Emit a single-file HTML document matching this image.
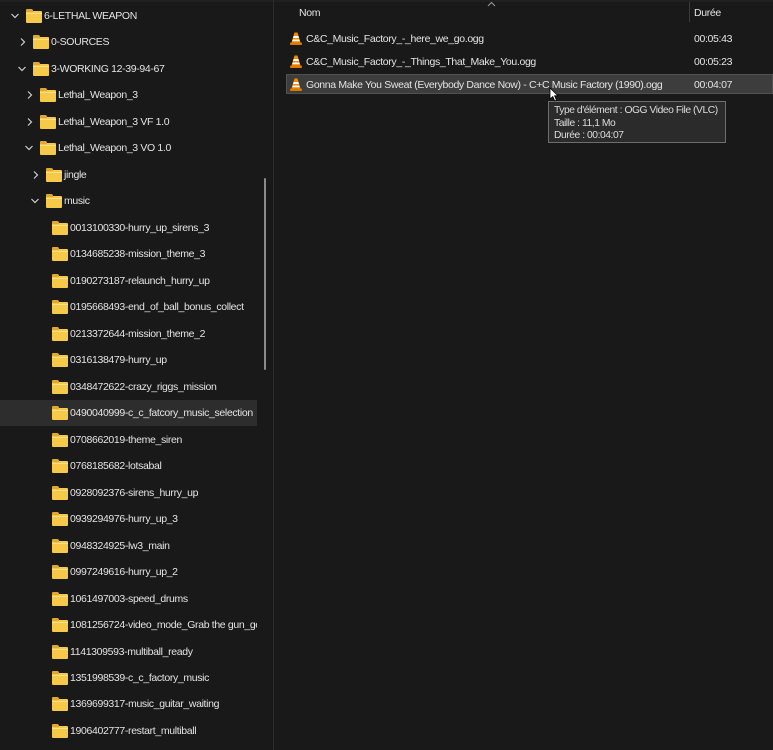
<!DOCTYPE html>
<html><head><meta charset="utf-8"><style>
body{margin:0;width:773px;height:750px;background:#191919;overflow:hidden;font-family:"Liberation Sans",sans-serif;font-size:10.5px;letter-spacing:-0.35px;color:#e4e4e4;position:relative}
.r{position:absolute;height:26px;line-height:26px;white-space:nowrap}
.f{position:absolute;width:16px;height:12px;background:#f7c948;border-radius:1px;top:8px}
.f:before{content:"";position:absolute;left:0;top:-2px;width:7px;height:3px;background:#e0a82e;border-radius:1px 2px 0 0}
.f:after{content:"";position:absolute;left:0;top:2px;width:16px;height:1px;background:#ffe08a}
.c{position:absolute;top:8px}
.t{position:absolute;top:0}
.sel{position:absolute;left:0;width:257px;height:26px;top:400px;background:#2d2d2d}
.vlc{position:absolute;left:290px;width:12px;height:13px}
.fl{position:absolute;left:306px;height:20px;line-height:20px;white-space:nowrap}
.du{position:absolute;left:694px;height:20px;line-height:20px}
</style></head><body>
<div style="position:absolute;left:0;top:0;width:773px;height:2px;background:#202020"></div>
<div style="position:absolute;left:273px;top:0;width:1px;height:750px;background:#2b2b2b"></div>
<div class="sel"></div>
<div style="position:absolute;left:264px;top:178px;width:2px;height:192px;background:#8a8a8a;border-radius:1px"></div>
<div id="tree"></div>
<script>
var rows=[[0,'v','6-LETHAL WEAPON'],[1,'>','0-SOURCES'],[1,'v','3-WORKING 12-39-94-67'],[2,'>','Lethal_Weapon_3'],[2,'>','Lethal_Weapon_3 VF 1.0'],[2,'v','Lethal_Weapon_3 VO 1.0'],[3,'>','jingle'],[3,'v','music'],
[4,'','0013100330-hurry_up_sirens_3'],[4,'','0134685238-mission_theme_3'],[4,'','0190273187-relaunch_hurry_up'],[4,'','0195668493-end_of_ball_bonus_collect'],[4,'','0213372644-mission_theme_2'],[4,'','0316138479-hurry_up'],[4,'','0348472622-crazy_riggs_mission'],[4,'','0490040999-c_c_fatcory_music_selection'],[4,'','0708662019-theme_siren'],[4,'','0768185682-lotsabal'],[4,'','0928092376-sirens_hurry_up'],[4,'','0939294976-hurry_up_3'],[4,'','0948324925-lw3_main'],[4,'','0997249616-hurry_up_2'],[4,'','1061497003-speed_drums'],[4,'','1081256724-video_mode_Grab the gun_get'],[4,'','1141309593-multiball_ready'],[4,'','1351998539-c_c_factory_music'],[4,'','1369699317-music_guitar_waiting'],[4,'','1906402777-restart_multiball']];
var h='';
rows.forEach(function(r,i){var y=Math.round(3+i*26.48);var ix=[26,33,40,46,52][r[0]];var cx=ix-16;
h+='<div class="r" style="left:0;top:'+y+'px;width:257px;overflow:hidden">';
if(r[1]=='>')h+='<svg class="c" style="left:'+(cx+1)+'px" width="10" height="10"><path d="M3 1.5L6.5 5L3 8.5" stroke="#d0d0d0" stroke-width="1.2" fill="none"/></svg>';
if(r[1]=='v')h+='<svg class="c" style="left:'+cx+'px" width="10" height="10"><path d="M1.5 3L5 6.5L8.5 3" stroke="#d0d0d0" stroke-width="1.2" fill="none"/></svg>';
h+='<div class="f" style="left:'+ix+'px"></div><span class="t" style="left:'+(ix+18)+'px">'+r[2]+'</span></div>';});
document.getElementById('tree').innerHTML=h;
</script>
<div style="position:absolute;left:299px;top:7px">Nom</div>
<svg style="position:absolute;left:487px;top:1px" width="9" height="6"><path d="M1 5L4.5 1.5L8 5" stroke="#999" fill="none"/></svg>
<div style="position:absolute;left:689px;top:2px;width:1px;height:20px;background:#3a3a3a"></div>
<div style="position:absolute;left:694px;top:7px">Durée</div>
<div style="position:absolute;left:286px;top:74px;width:487px;height:20px;background:#3d3d3d;border:1px solid #505050;box-sizing:border-box"></div>
<svg class="vlc" style="top:32px" viewBox="0 0 12 13"><path d="M4.5 0.5h3l3 10h-9z" fill="#f08a00"/><path d="M3.6 4h4.8l.6 2H3z M2.7 7.5h6.6l.5 1.8H2.2z" fill="#fff"/><rect x="0" y="10.5" width="12" height="2.5" rx="1" fill="#e07800"/></svg>
<svg class="vlc" style="top:55px" viewBox="0 0 12 13"><path d="M4.5 0.5h3l3 10h-9z" fill="#f08a00"/><path d="M3.6 4h4.8l.6 2H3z M2.7 7.5h6.6l.5 1.8H2.2z" fill="#fff"/><rect x="0" y="10.5" width="12" height="2.5" rx="1" fill="#e07800"/></svg>
<svg class="vlc" style="top:78px" viewBox="0 0 12 13"><path d="M4.5 0.5h3l3 10h-9z" fill="#f08a00"/><path d="M3.6 4h4.8l.6 2H3z M2.7 7.5h6.6l.5 1.8H2.2z" fill="#fff"/><rect x="0" y="10.5" width="12" height="2.5" rx="1" fill="#e07800"/></svg>
<div class="fl" style="top:29px">C&amp;C_Music_Factory_-_here_we_go.ogg</div>
<div class="fl" style="top:52px">C&amp;C_Music_Factory_-_Things_That_Make_You.ogg</div>
<div class="fl" style="top:75px">Gonna Make You Sweat (Everybody Dance Now) - C+C Music Factory (1990).ogg</div>
<div class="du" style="top:29px">00:05:43</div>
<div class="du" style="top:52px">00:05:23</div>
<div class="du" style="top:75px">00:04:07</div>
<div style="position:absolute;left:548px;top:101px;width:178px;height:42px;background:#2b2b2b;border:1px solid #6e6e6e;box-sizing:border-box;padding:3px 0 0 5px;line-height:12.5px;font-size:10.3px;letter-spacing:-0.45px;color:#dcdcdc;white-space:nowrap">Type d'élément : OGG Video File (VLC)<br>Taille : 11,1 Mo<br>Durée : 00:04:07</div>
<svg style="position:absolute;left:549px;top:87px" width="10" height="15"><path d="M1 1V12L3.8 9.5L5.8 14L7.5 13.2L5.6 8.8H9Z" fill="#fff" stroke="#000" stroke-width="0.8"/></svg>
</body></html>
